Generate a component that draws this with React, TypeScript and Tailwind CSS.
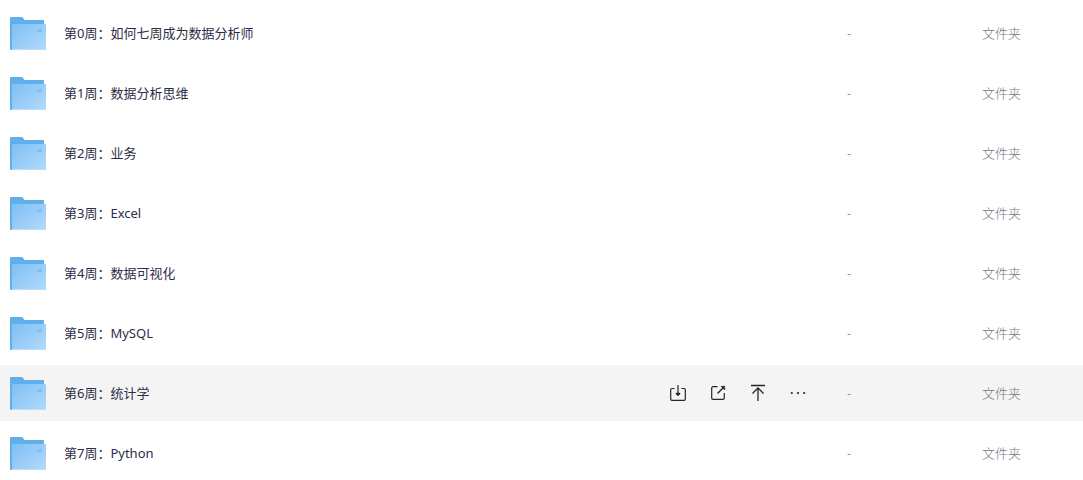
import { ComponentType } from "react";

type Folder = {
  id: number;
  name: string;
  active?: boolean;
};

const folders: Folder[] = [
  { id: 0, name: "第0周：如何七周成为数据分析师" },
  { id: 1, name: "第1周：数据分析思维" },
  { id: 2, name: "第2周：业务" },
  { id: 3, name: "第3周：Excel" },
  { id: 4, name: "第4周：数据可视化" },
  { id: 5, name: "第5周：MySQL" },
  { id: 6, name: "第6周：统计学", active: true },
  { id: 7, name: "第7周：Python" },
];

function FolderIcon() {
  return (
    <svg className="h-9 w-9 shrink-0" viewBox="0 0 36 36" aria-hidden="true">
      <defs>
        <linearGradient id="folder-front" x1="0" y1="0" x2="1" y2="1">
          <stop offset="0" stopColor="#7fbff3" />
          <stop offset="1" stopColor="#b2dafc" />
        </linearGradient>
      </defs>
      <path d="M0 3a1 1 0 0 1 1-1h10.500a2 2 0 0 1 1.500.7L14.500 5H33a1 1 0 0 1 1 1v29H1a1 1 0 0 1-1-1z" fill="#60aeea" />
      <path d="M2 9h33a1 1 0 0 1 1 1v24a1 1 0 0 1-1 1H2z" fill="url(#folder-front)" />
      <path d="M2 34h34a1 1 0 0 1-1 1H2z" fill="#bcdefb" />
      <path d="M27 14.500h5M27 16.500h5" stroke="#74b6f1" strokeWidth="1" />
    </svg>
  );
}

function DownloadIcon() {
  return (
    <svg className="h-5 w-5" viewBox="0 0 20 20" fill="none" stroke="currentColor" strokeWidth="1.200" aria-hidden="true">
      <path d="M6.500 5.500H4A1.300 1.300 0 0 0 2.700 6.800v9.200A1.300 1.300 0 0 0 4 17.300h12a1.300 1.300 0 0 0 1.300-1.300V6.800A1.300 1.300 0 0 0 16 5.500h-2.500" />
      <path d="M10 2v9" />
      <path d="M8 10h4v1l-2 2-2-2z" fill="currentColor" strokeWidth="0.500" />
    </svg>
  );
}

function ShareIcon() {
  return (
    <svg className="h-5 w-5" viewBox="0 0 20 20" fill="none" stroke="currentColor" strokeWidth="1.200" aria-hidden="true">
      <path d="M9.500 3.700H5A1.300 1.300 0 0 0 3.700 5v10A1.300 1.300 0 0 0 5 16.300h10a1.300 1.300 0 0 0 1.300-1.300v-5" />
      <path d="M9.500 10.500l6-6" strokeWidth="1.400" />
      <path d="M13 3.300h3.700V7z" fill="currentColor" strokeWidth="0.600" />
    </svg>
  );
}

function TopIcon() {
  return (
    <svg className="h-5 w-5" viewBox="0 0 20 20" fill="none" stroke="currentColor" strokeWidth="1.300" aria-hidden="true">
      <path d="M3 2.500h14M10 5.500V18M4.500 10.500L10 5l5.500 5.500" />
    </svg>
  );
}

function MoreIcon() {
  return (
    <svg className="h-5 w-5" viewBox="0 0 20 20" fill="currentColor" aria-hidden="true">
      <circle cx="3.800" cy="10" r="1.100" />
      <circle cx="10" cy="10" r="1.100" />
      <circle cx="16.200" cy="10" r="1.100" />
    </svg>
  );
}

const actions: { label: string; icon: ComponentType }[] = [
  { label: "下载", icon: DownloadIcon },
  { label: "分享", icon: ShareIcon },
  { label: "置顶", icon: TopIcon },
  { label: "更多", icon: MoreIcon },
];

function FolderRow({ folder }: { folder: Folder }) {
  return (
    <tr className={`h-14 ${folder.active ? "bg-[#f4f4f4]" : ""}`}>
      <td className="p-0 pl-2.5">
        <div className="flex items-center gap-[18px]">
          <FolderIcon />
          <a href={`#week-${folder.id}`} className="truncate font-normal text-[#2c2d46]">
            {folder.name}
          </a>
        </div>
      </td>
      <td className="p-0">
        {folder.active && (
          <div className="flex gap-5 text-[#25262b]">
            {actions.map(({ label, icon: Icon }) => (
              <button key={label} type="button" aria-label={label} className="cursor-pointer">
                <Icon />
              </button>
            ))}
          </div>
        )}
      </td>
      <td className="p-0">-</td>
      <td className="p-0">文件夹</td>
    </tr>
  );
}

export default function App() {
  return (
    <main className="bg-white pt-px font-['Noto_Sans','Noto_Sans_CJK_SC',sans-serif] text-[13px] leading-5 font-light text-[#777883]">
      <table className="w-full table-fixed border-separate border-spacing-x-0 border-spacing-y-1">
        <colgroup>
          <col />
          <col className="w-[179px]" />
          <col className="w-[135px]" />
          <col className="w-[101px]" />
        </colgroup>
        <tbody>
          {folders.map((folder) => (
            <FolderRow key={folder.id} folder={folder} />
          ))}
        </tbody>
      </table>
    </main>
  );
}
